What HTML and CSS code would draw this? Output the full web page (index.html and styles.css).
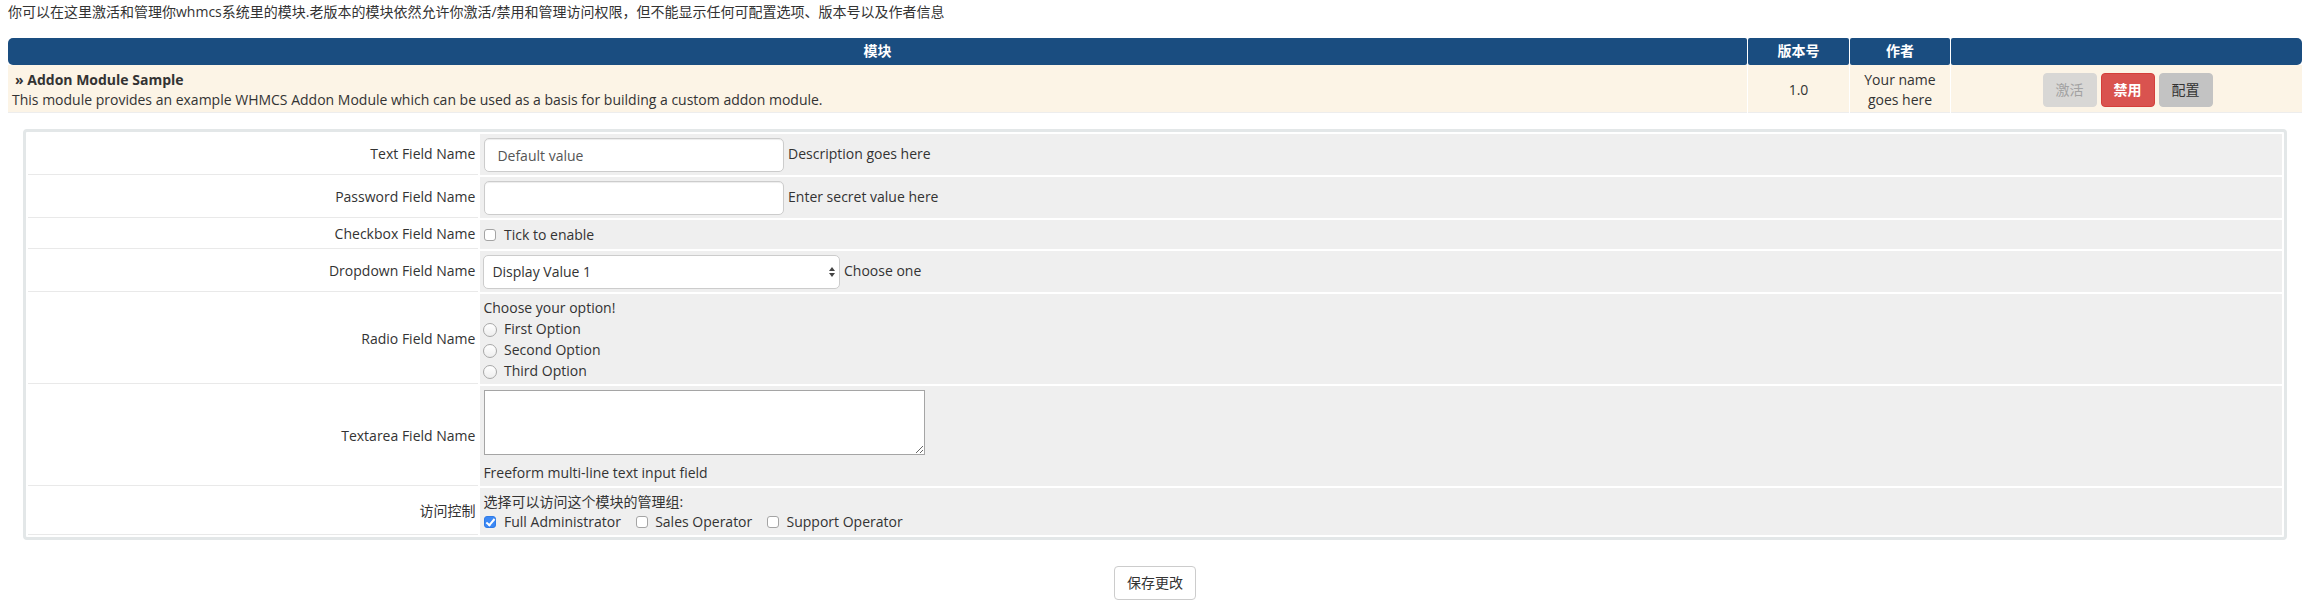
FILE: index.html
```html
<!DOCTYPE html>
<html lang="zh-CN">
<head>
<meta charset="utf-8">
<title>插件模块</title>
<link rel="stylesheet" href="styles.css">
</head>
<body>
<div class="page">
  <p class="intro">你可以在这里激活和管理你whmcs系统里的模块.老版本的模块依然允许你激活/禁用和管理访问权限，但不能显示任何可配置选项、版本号以及作者信息</p>

  <table class="datatable">
    <thead>
      <tr>
        <th class="col-module">模块</th>
        <th class="col-version">版本号</th>
        <th class="col-author">作者</th>
        <th class="col-actions"></th>
      </tr>
    </thead>
    <tbody>
      <tr>
        <td class="cell-module">
          <div class="mod-title">» Addon Module Sample</div>
          <div class="mod-desc">This module provides an example WHMCS Addon Module which can be used as a basis for building a custom addon module.</div>
        </td>
        <td class="cell-center">1.0</td>
        <td class="cell-center">Your name goes here</td>
        <td class="cell-actions">
          <div class="btn-row">
            <button class="btn btn-disabled" type="button">激活</button>
            <button class="btn btn-danger" type="button">禁用</button>
            <button class="btn btn-config" type="button">配置</button>
          </div>
        </td>
      </tr>
    </tbody>
  </table>

  <div class="config-panel">
    <table class="form">
      <tr>
        <td class="fieldlabel">Text Field Name</td>
        <td class="fieldarea"><input class="form-control w300" type="text" value="Default value"> Description goes here</td>
      </tr>
      <tr>
        <td class="fieldlabel">Password Field Name</td>
        <td class="fieldarea"><input class="form-control w300" type="password" value=""> Enter secret value here</td>
      </tr>
      <tr>
        <td class="fieldlabel">Checkbox Field Name</td>
        <td class="fieldarea"><label class="opt"><input class="cb" type="checkbox"> Tick to enable</label></td>
      </tr>
      <tr>
        <td class="fieldlabel">Dropdown Field Name</td>
        <td class="fieldarea"><span class="select-wrap"><select class="form-control select-mac"><option>Display Value 1</option><option>Display Value 2</option></select><svg class="select-arrow" width="6" height="10" viewBox="0 0 6 10"><path d="M3 0 L6 4 L0 4 Z M0 6 L6 6 L3 10 Z" fill="#444"/></svg></span> Choose one</td>
      </tr>
      <tr>
        <td class="fieldlabel">Radio Field Name</td>
        <td class="fieldarea">
          <div class="line">Choose your option!</div>
          <label class="opt line"><input class="rd" type="radio" name="radio"> First Option</label>
          <label class="opt line"><input class="rd" type="radio" name="radio"> Second Option</label>
          <label class="opt line"><input class="rd" type="radio" name="radio"> Third Option</label>
        </td>
      </tr>
      <tr>
        <td class="fieldlabel">Textarea Field Name</td>
        <td class="fieldarea">
          <textarea class="ta"></textarea>
          <div class="line">Freeform multi-line text input field</div>
        </td>
      </tr>
      <tr>
        <td class="fieldlabel">访问控制</td>
        <td class="fieldarea">
          <div class="line">选择可以访问这个模块的管理组:</div>
          <div class="line"><label class="opt inline"><input class="cb" type="checkbox" checked> Full Administrator</label> <label class="opt inline"><input class="cb" type="checkbox"> Sales Operator</label> <label class="opt inline"><input class="cb" type="checkbox"> Support Operator</label></div>
        </td>
      </tr>
    </table>
  </div>

  <div class="actions">
    <button class="btn btn-save" type="button">保存更改</button>
  </div>
</div>
</body>
</html>
```

FILE: styles.css
```css
* {
  box-sizing: border-box;
}

html,
body {
  margin: 0;
  padding: 0;
  background: #fff;
}

body {
  font-family: "Open Sans", "Noto Sans CJK SC", sans-serif;
  font-size: 14px;
  line-height: 20px;
  color: #333;
}

.page {
  padding: 2px 2px 0 8px;
}

.intro {
  margin: 0 0 16px;
}

/* module list table */
.datatable {
  width: calc(100% + 2px);
  margin: 0 -1px;
  border-collapse: separate;
  border-spacing: 1px 0;
  table-layout: fixed;
}

.datatable th {
  background: #1a4d80;
  color: #fff;
  font-weight: bold;
  text-align: center;
  padding: 3px 5px 4px;
  border-radius: 2px;
}

.datatable th:first-child {
  border-radius: 5px 2px 2px 5px;
}

.datatable th:last-child {
  border-radius: 2px 5px 5px 2px;
}

.col-version {
  width: 101px;
}

.col-author {
  width: 100px;
}

.col-actions {
  width: 351px;
}

.datatable td {
  background: #fcf4e6;
  border-bottom: 1px solid #ededed;
  padding: 5px 4px 2px;
  vertical-align: middle;
}

.mod-title {
  font-weight: bold;
  padding-left: 3px;
}

.cell-center {
  text-align: center;
}

.btn-row {
  display: flex;
  justify-content: center;
  gap: 4px;
  padding-left: 2px;
}

.btn {
  display: inline-block;
  font-family: inherit;
  font-size: 14px;
  line-height: 20px;
  padding: 6px 12px;
  border: 1px solid transparent;
  border-radius: 4px;
  cursor: pointer;
  color: #333;
  background: #fff;
}

.btn-disabled {
  background: #d8d7d5;
  border-color: #d8d7d5;
  color: #a2a2a2;
  cursor: not-allowed;
}

.btn-danger {
  background: #d9534f;
  border-color: #d43f3a;
  color: #fff;
  font-weight: bold;
}

.btn-config {
  background: #c3c3c3;
  border-color: #c3c3c3;
  color: #333;
}

/* configuration panel */
.config-panel {
  margin: 16px 15px 0;
  border: 3px solid #e3e7e8;
  border-radius: 4px;
  background: #fff;
}

.form {
  width: 100%;
  border-collapse: separate;
  border-spacing: 2px;
}

.fieldlabel {
  width: 20%;
  text-align: right;
  vertical-align: middle;
  padding: 4px 3px 4px 4px;
  border-bottom: 1px solid #e9e9e9;
  background: #fff;
  white-space: nowrap;
}

.fieldarea {
  background: #efefef;
  vertical-align: middle;
  padding: 4px 4px 3px 3px;
}

.form-control {
  display: inline-block;
  height: 34px;
  padding: 6px 12px;
  font-family: inherit;
  font-size: 14px;
  line-height: 20px;
  color: #555;
  background: #fff;
  border: 1px solid #ccc;
  border-radius: 5px;
  box-shadow: inset 0 1px 1px rgba(0, 0, 0, 0.075);
  vertical-align: middle;
  margin: 0 0 0 1px;
}

.w300 {
  width: 300px;
}

.select-wrap {
  position: relative;
  display: inline-block;
  vertical-align: middle;
}

.select-mac {
  width: 357px;
  padding: 6px 20px 6px 8px;
  appearance: none;
  -webkit-appearance: none;
  color: #333;
  box-shadow: none;
  display: block;
  margin: 0;
}

.select-arrow {
  position: absolute;
  right: 5px;
  top: 12px;
  pointer-events: none;
}

.line {
  display: block;
  line-height: 20px;
}

.opt.line {
  height: 21px;
  line-height: 21px;
}

.opt {
  cursor: pointer;
}

.opt.inline {
  display: inline-block;
  margin-right: 10px;
}

.cb,
.rd {
  -webkit-appearance: none;
  appearance: none;
  display: inline-block;
  width: 12px;
  height: 12px;
  margin: 0 4px 0 1px;
  vertical-align: -1px;
  background: #fff;
  border: 1px solid #a4a4a4;
  position: relative;
}

.cb {
  border-radius: 3px;
}

.cb:checked {
  background: #3b88f5;
  border-color: #2f7be6;
}

.cb:checked::after {
  content: "";
  position: absolute;
  left: 3px;
  top: 0px;
  width: 3px;
  height: 7px;
  border: solid #fff;
  border-width: 0 2px 2px 0;
  transform: rotate(40deg);
}

.rd {
  width: 14px;
  height: 14px;
  margin: 0 3px 0 0;
  border-radius: 50%;
  background: linear-gradient(#fff, #eeeeee);
  border-color: #a8a8a8;
  vertical-align: -3px;
}

.ta {
  display: block;
  width: 441px;
  height: 65px;
  margin: 0 0 8px 1px;
  padding: 2px;
  font-family: inherit;
  font-size: 14px;
  border: 1px solid #a5a5a5;
  border-radius: 0;
  background: #fff;
}

/* footer actions */
.actions {
  margin-top: 26px;
  padding-bottom: 15px;
  text-align: center;
  border-bottom: 1px solid #e6e6e6;
}

.btn-save {
  background: #fff;
  border-color: #ccc;
  color: #333;
}
```
